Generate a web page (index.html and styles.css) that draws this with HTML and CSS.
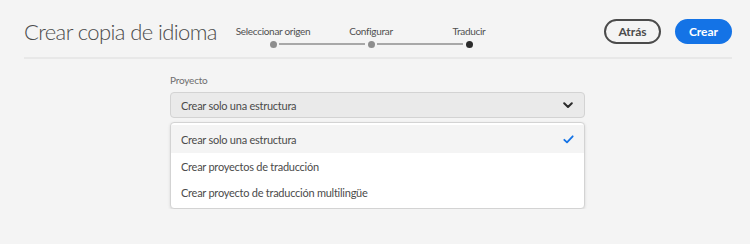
FILE: index.html
```html
<!DOCTYPE html>
<html lang="es">
<head>
    <meta charset="UTF-8">
    <meta name="viewport" content="width=device-width, initial-scale=1.0">
    <title>Crear copia de idioma</title>
    <link rel="stylesheet" href="styles.css">
</head>
<body>
    <div class="header">
        <h1 class="title">Crear copia de idioma</h1>
        <div class="steps">
            <div class="step done">
                <span class="steplabel">Seleccionar origen</span>
                <span class="dot"></span>
            </div>
            <div class="step done">
                <span class="steplabel">Configurar</span>
                <span class="dot"></span>
            </div>
            <div class="step current">
                <span class="steplabel">Traducir</span>
                <span class="dot"></span>
            </div>
        </div>
        <div class="actions">
            <button class="btn back">Atrás</button>
            <button class="btn create">Crear</button>
        </div>
    </div>
    <div class="form">
        <label class="fieldlabel">Proyecto</label>
        <div class="select">
            <span>Crear solo una estructura</span>
            <svg class="chevron" width="10" height="7" viewBox="0 0 10 7">
                <path d="M1.2 1.2 L5 5 L8.8 1.2" fill="none" stroke="#2c2c2c" stroke-width="2" stroke-linecap="round" stroke-linejoin="round"/>
            </svg>
        </div>
        <ul class="menu">
            <li class="item selected">
                <span>Crear solo una estructura</span>
                <svg class="check" width="11" height="9" viewBox="0 0 11 9">
                    <path d="M1.3 4.8 L4 7.4 L9.7 1.3" fill="none" stroke="#1473e6" stroke-width="1.8" stroke-linecap="round" stroke-linejoin="round"/>
                </svg>
            </li>
            <li class="item">Crear proyectos de traducción</li>
            <li class="item">Crear proyecto de traducción multilingüe</li>
        </ul>
    </div>
</body>
</html>
```

FILE: styles.css
```css
body {
    margin: 0;
    background-color: #f4f4f4;
    font-family: Lato, "Open Sans", sans-serif;
    color: #4b4b4b;
}

.header {
    display: flex;
    align-items: center;
    height: 57px;
    margin: 0 18px 0 24px;
    border-bottom: 2px solid #e8e8e8;
}

.title {
    width: 200px;
    margin: 0;
    font-size: 22px;
    font-weight: 300;
    letter-spacing: -0.6px;
    color: #4b4b4b;
    padding-top: 6px;
    white-space: nowrap;
}

.steps {
    display: flex;
    padding-top: 16px;
}

.step {
    position: relative;
    width: 98px;
    display: flex;
    flex-direction: column;
    align-items: center;
}

.steplabel {
    font-size: 10px;
    letter-spacing: -0.3px;
    color: #505050;
    height: 14px;
}

.dot {
    width: 7px;
    height: 7px;
    border-radius: 50%;
    background-color: #8e8e8e;
    margin-top: 2px;
}

.step.current .dot {
    background-color: #2c2c2c;
}

.step + .step::before {
    content: "";
    position: absolute;
    left: -43px;
    right: 55px;
    top: 18px;
    height: 2px;
    background-color: #a8a8a8;
}

.actions {
    margin-left: auto;
    display: flex;
    gap: 14px;
    padding-top: 6px;
}

.btn {
    height: 25px;
    width: 57px;
    border-radius: 13px;
    font-family: Lato, "Open Sans", sans-serif;
    font-size: 12px;
    font-weight: bold;
    cursor: pointer;
    padding: 0;
}

.back {
    background-color: transparent;
    border: 2px solid #4b4b4b;
    color: #4b4b4b;
}

.create {
    background-color: #1473e6;
    border: none;
    color: white;
}

.form {
    width: 415px;
    margin-left: 170px;
    padding-top: 15px;
}

.fieldlabel {
    display: block;
    font-size: 10px;
    letter-spacing: -0.2px;
    color: #6e6e6e;
    height: 18px;
}

.select {
    display: flex;
    align-items: center;
    justify-content: space-between;
    height: 24px;
    padding: 0 10px 0 10px;
    background-color: #eaeaea;
    border: 1px solid #d3d3d3;
    border-radius: 4px;
    font-size: 11px;
    letter-spacing: -0.25px;
    color: #4b4b4b;
}

.chevron {
    margin-right: 1px;
}

.menu {
    list-style: none;
    margin: 4px 0 0 0;
    padding: 2px 0 3px 0;
    background-color: white;
    border: 1px solid #d3d3d3;
    border-radius: 4px;
    box-shadow: 0 1px 3px rgba(0, 0, 0, 0.12);
}

.item {
    display: flex;
    align-items: center;
    justify-content: space-between;
    height: 26px;
    padding: 0 10px 0 10px;
    font-size: 11px;
    letter-spacing: -0.25px;
    color: #4b4b4b;
}

.item.selected {
    background-color: #f4f4f4;
    height: 28px;
}
```
